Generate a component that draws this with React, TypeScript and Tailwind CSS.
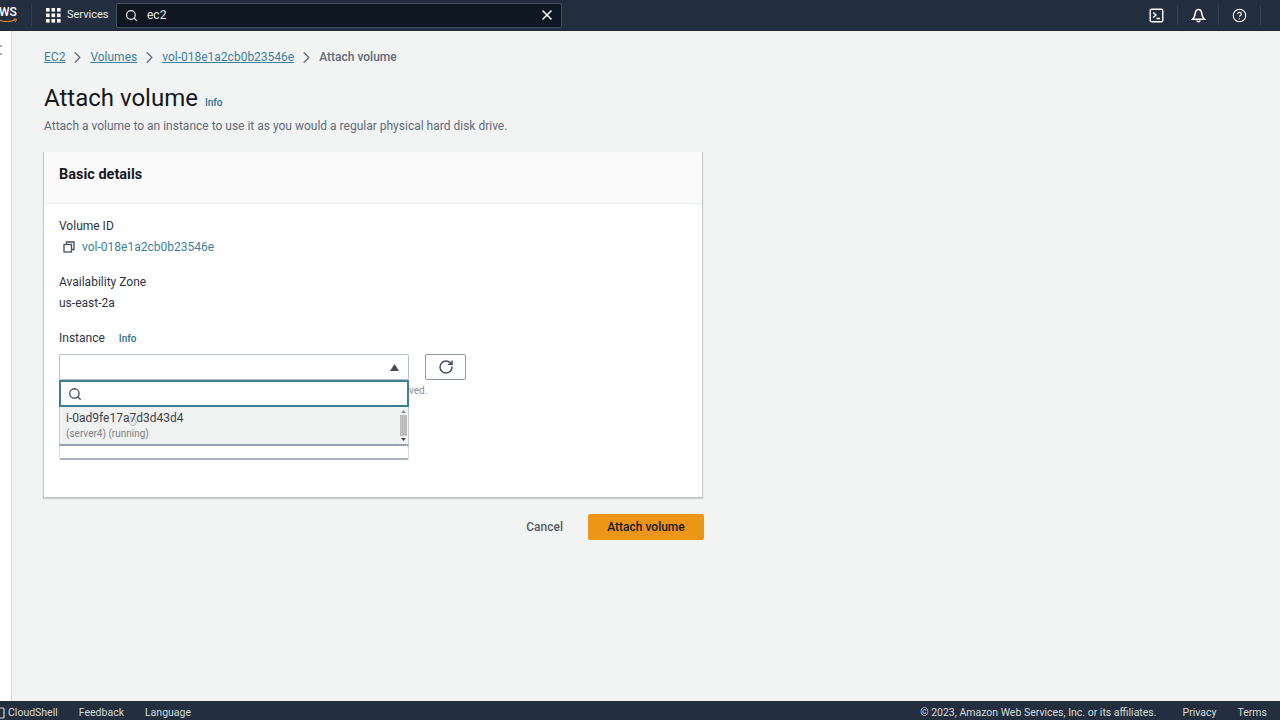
import { Search, X, RotateCw, HelpCircle, ChevronRight } from "lucide-react";

function Crumb({ label }: { label: string }) {
  return (
    <>
      <a className="text-[12px] text-[#3d7f9b] underline">{label}</a>
      <ChevronRight className="w-[19px] h-[19px] text-[#5f6b7a] mx-[3px]" strokeWidth={1.5} />
    </>
  );
}

function TopBar() {
  return (
    <header className="h-[31px] bg-[#232f3e] flex items-center shrink-0 border-b border-[#1b2533] overflow-hidden">
      <div className="w-[31px] relative h-full shrink-0 overflow-hidden">
        <span className="absolute left-[-1px] top-[3px] text-[12px] font-medium text-white">WS</span>
        <svg className="absolute left-0 top-[18px]" width="18" height="5" viewBox="0 0 18 5">
          <path d="M0 2.500c5 1.500 10 1.500 15-.5M13.500 1l3 .3-1 2.400" fill="none" stroke="#ec9a1e" strokeWidth="1" />
        </svg>
      </div>
      <div className="w-[1px] h-[22px] bg-[#2f3c4c]" />
      <div className="flex items-center gap-[6px] ml-[14px] w-[70px] shrink-0">
        <svg width="15" height="15" viewBox="0 0 15 15" fill="#ffffff">
          <rect x="0" y="0" width="3.600" height="3.600" />
          <rect x="5.500" y="0" width="3.600" height="3.600" />
          <rect x="11" y="0" width="3.600" height="3.600" />
          <rect x="0" y="5.500" width="3.600" height="3.600" />
          <rect x="5.500" y="5.500" width="3.600" height="3.600" />
          <rect x="11" y="5.500" width="3.600" height="3.600" />
          <rect x="0" y="11" width="3.600" height="3.600" />
          <rect x="5.500" y="11" width="3.600" height="3.600" />
          <rect x="11" y="11" width="3.600" height="3.600" />
        </svg>
        <span className="text-[11px] text-[#e9ebed]">Services</span>
      </div>
      <div className="w-[446px] h-[25px] shrink-0 bg-[#0f1722] border border-[#414d5c] rounded-[2px] flex items-center pl-[8px] pr-[6px]">
        <Search className="w-[13px] h-[13px] text-[#e9ebed]" strokeWidth={2.2} />
        <span className="ml-[9px] text-[12px] text-[#e9ebed] flex-1">ec2</span>
        <X className="w-[16px] h-[16px] text-white" strokeWidth={2.4} />
      </div>
      <div className="flex-1" />
      <div className="flex items-center h-full text-white">
        <div className="w-[41px] flex justify-center">
          <svg width="15" height="15" viewBox="0 0 15 15" fill="none" stroke="#ffffff" strokeWidth="1.400">
            <rect x="1.200" y="1.200" width="12.600" height="12.600" rx="1.500" />
            <path d="M4.200 4.400l2.800 2.600-2.800 2.600M7.500 10.500h3.500" />
          </svg>
        </div>
        <div className="w-[1px] h-[20px] bg-[#334050]" />
        <div className="w-[40px] flex justify-center">
          <svg width="15" height="15" viewBox="0 0 15 15" fill="none" stroke="#ffffff" strokeWidth="1.500">
            <path d="M1.500 11.200h12c-1.600-1.400-2.300-2.600-2.600-5C10.600 3.400 9.400 1.500 7.500 1.500S4.400 3.400 4.100 6.200c-.3 2.400-1 3.600-2.600 5z" />
            <path d="M5.800 12.500a1.800 1.800 0 0 0 3.400 0" />
          </svg>
        </div>
        <div className="w-[1px] h-[20px] bg-[#334050]" />
        <div className="w-[41px] flex justify-center">
          <HelpCircle className="w-[15px] h-[15px]" strokeWidth={1.800} />
        </div>
        <div className="w-[1px] h-[20px] bg-[#334050]" />
        <div className="w-[19px]" />
      </div>
    </header>
  );
}

function InstanceField() {
  return (
    <div>
      <div className="flex items-center h-[16px] text-[12px] text-[#2c3440]">
        Instance
        <span className="ml-[14px] text-[10px] font-medium text-[#2d7390]">Info</span>
      </div>
      <div className="flex gap-[16px] mt-[8px]">
        <div className="relative w-[350px]">
          <div className="h-[26px] bg-white border border-[#b6bec9] rounded-[2px] flex items-center justify-end pr-[9px]">
            <svg width="9" height="7" viewBox="0 0 9 7" fill="#414d5c">
              <path d="M4.500 0L9 7H0z" />
            </svg>
          </div>
          {/* open dropdown lies over the hint text */}
          <div className="absolute left-0 top-[26px] w-[350px] z-10">
            <div className="h-[27px] bg-white border-2 border-[#3f7f92] flex items-center pl-[7px]">
              <Search className="w-[14px] h-[14px] text-[#414d5c]" strokeWidth={2.200} />
            </div>
            <div className="h-[39px] bg-[#f0f1f1] border-x border-b-2 border-x-[#c8ced4] border-b-[#9aa3ad] flex">
              <div className="flex-1 pl-[6px] pt-[3px]">
                <div className="text-[12px] leading-[16px] text-[#3c434d]">i-0ad9fe17a7d3d43d4</div>
                <div className="text-[10px] leading-[15px] text-[#7a828c]">(server4) (running)</div>
              </div>
              <div className="w-[9px] bg-[#f4f4f4] flex flex-col items-center justify-between py-[3px]">
                <svg width="5" height="3" viewBox="0 0 5 3" fill="#8b8f94">
                  <path d="M2.500 0L5 3H0z" />
                </svg>
                <div className="w-[7px] h-[21px] bg-[#bdbdbd]" />
                <svg width="5" height="3" viewBox="0 0 5 3" fill="#444">
                  <path d="M2.500 3L5 0H0z" />
                </svg>
              </div>
            </div>
            <div className="h-[14px] bg-white border-x border-b-2 border-x-[#d5dbdf] border-b-[#aab2bb] rounded-b-[2px]" />
            <svg className="absolute left-[68px] top-[35px]" width="11" height="12" viewBox="0 0 11 12" fill="none" stroke="#9aa0a6" strokeWidth="0.800">
              <path d="M2 5c0 3 1.500 5.500 4 5.500S9.500 8.500 9 5.500C8 4.500 6 4 4.500 4.500L3.500 1.500" />
            </svg>
          </div>
          <div className="mt-[3px] pl-[350px] text-[10px] text-[#8a929b] whitespace-nowrap">ved.</div>
        </div>
        <button className="w-[41px] h-[26px] bg-white border border-[#8d99a8] rounded-[2px] flex items-center justify-center">
          <RotateCw className="w-[16px] h-[16px] text-[#414d5c]" strokeWidth={2.200} />
        </button>
      </div>
    </div>
  );
}

function DetailsCard() {
  return (
    <section className="w-[660px] h-[346px] bg-white border-x border-b border-[#c4c9cd] shadow-[0_1px_1px_rgba(0,0,0,0.15)]">
      <div className="h-[52px] bg-[#fafafa] border-b border-[#eaeded] pl-[15px] pb-[5px] flex items-center">
        <h2 className="text-[14.500px] font-bold text-[#16191f]">Basic details</h2>
      </div>
      <div className="pl-[15px] pt-[14px]">
        <div className="h-[16px] flex items-center text-[12px] text-[#2c3440]">Volume ID</div>
        <div className="h-[16px] mt-[5px] flex items-center pl-[4px]">
          <svg width="12" height="12" viewBox="0 0 12 12" fill="none" stroke="#414d5c" strokeWidth="1.300">
            <rect x="1" y="3.500" width="7.500" height="7.500" />
            <path d="M3.500 3.500V1H11v7.500H8.500" />
          </svg>
          <a className="ml-[7px] text-[12px] text-[#3d7f9b]">vol-018e1a2cb0b23546e</a>
        </div>
        <div className="h-[16px] mt-[19px] flex items-center text-[12px] text-[#2c3440]">Availability Zone</div>
        <div className="h-[16px] mt-[5px] flex items-center text-[12px] text-[#2c3440]">us-east-2a</div>
        <div className="mt-[19px]">
          <InstanceField />
        </div>
      </div>
    </section>
  );
}

export default function App() {
  return (
    <div className="w-[1280px] h-[720px] overflow-hidden flex flex-col bg-[#f2f3f3] font-['Roboto',sans-serif]">
      <TopBar />
      <div className="flex-1 flex min-h-0">
        <aside className="w-[12px] shrink-0 bg-white border-r border-[#d5dbdb] pt-[14px] overflow-hidden">
          <div className="w-[2px] h-[10px] border-y-2 border-[#aab2bb]" />
        </aside>
        <main className="flex-1 pl-[32px]">
          <nav className="mt-[18px] h-[16px] flex items-center">
            <Crumb label="EC2" />
            <Crumb label="Volumes" />
            <Crumb label="vol-018e1a2cb0b23546e" />
            <span className="text-[12px] font-medium text-[#5f6b7a]">Attach volume</span>
          </nav>
          <div className="mt-[17px] h-[32px] flex items-center">
            <h1 className="text-[24px] font-normal text-[#16191f]">Attach volume</h1>
            <span className="ml-[7px] mt-[8px] text-[10px] font-medium text-[#2d7390]">Info</span>
          </div>
          <p className="mt-[3px] h-[18px] text-[12px] leading-[18px] text-[#5f6b7a]">
            Attach a volume to an instance to use it as you would a regular physical hard disk drive.
          </p>
          <div className="mt-[17px] ml-[-1px]">
            <DetailsCard />
          </div>
          <div className="w-[660px] mt-[16px] flex items-center justify-end">
            <span className="text-[12px] font-medium text-[#545b64] mr-[25px]">Cancel</span>
            <button className="w-[116px] h-[26px] bg-[#ec9517] rounded-[2px] text-[12px] font-medium text-[#16191f]">
              Attach volume
            </button>
          </div>
        </main>
      </div>
      <footer className="h-[19px] shrink-0 bg-[#232f3e] flex items-center pt-[5px] text-[10.500px] text-[#d5dbdb] whitespace-nowrap">
        <svg className="ml-[-5px]" width="10" height="12" viewBox="0 0 10 12" fill="none" stroke="#d5dbdb" strokeWidth="1.200">
          <rect x="1" y="1" width="8" height="10" rx="1" />
        </svg>
        <span className="ml-[3px]">CloudShell</span>
        <span className="ml-[21px]">Feedback</span>
        <span className="ml-[21px]">Language</span>
        <span className="ml-auto">© 2023, Amazon Web Services, Inc. or its affiliates.</span>
        <span className="ml-[26px]">Privacy</span>
        <span className="ml-[21px] mr-[13px]">Terms</span>
      </footer>
    </div>
  );
}
